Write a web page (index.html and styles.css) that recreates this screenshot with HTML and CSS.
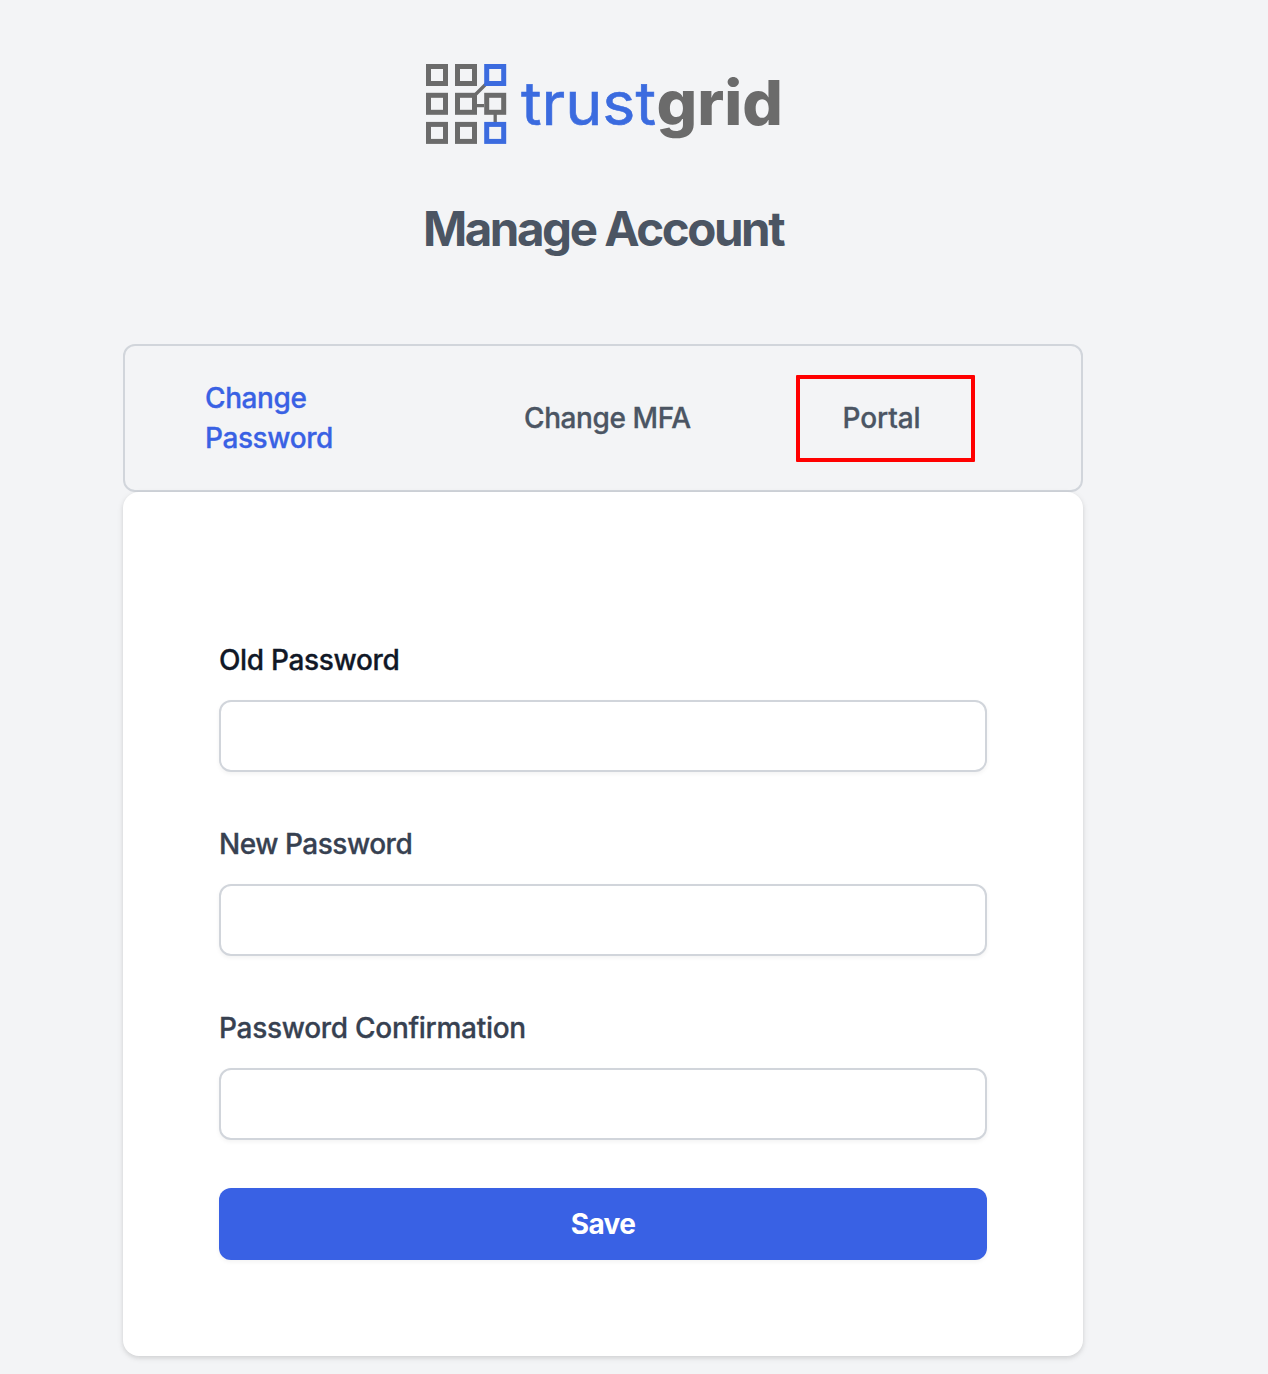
FILE: index.html
```html
<!DOCTYPE html>
<html lang="en">
<head>
<meta charset="utf-8">
<title>Manage Account</title>
<link rel="stylesheet" href="styles.css">
</head>
<body>
<main class="page">
  <header class="header">
    <svg class="logo" viewBox="0 0 358 88" role="img" aria-label="trustgrid">
      <g class="link"><path d="M49 33 62 20M51 41.7H60M71.2 50V60"/></g>
      <g class="node">
        <rect x="4.5" y="2.5" width="17" height="17"/>
        <rect x="33.5" y="2.5" width="17" height="17"/>
        <rect x="4.5" y="31.3" width="17" height="17"/>
        <rect x="33.5" y="31.3" width="17" height="17"/>
        <rect x="62.7" y="31.3" width="17" height="17"/>
        <rect x="4.5" y="60.4" width="17" height="17"/>
        <rect x="33.5" y="60.4" width="17" height="17"/>
        <g class="node-blue">
          <rect x="62.7" y="2.5" width="17" height="17"/>
          <rect x="62.7" y="60.4" width="17" height="17"/>
        </g>
      </g>
      <text class="word word-trust" x="97" y="60.6" textLength="135" lengthAdjust="spacingAndGlyphs">trust</text>
      <text class="word word-grid" x="232.5" y="60.6" textLength="126.5" lengthAdjust="spacingAndGlyphs">grid</text>
    </svg>
    <h1 class="title">Manage Account</h1>
  </header>
  <nav class="tabs">
    <a class="tab tab-active">Change Password</a>
    <a class="tab tab-mfa">Change MFA</a>
    <a class="tab tab-portal">Portal</a>
  </nav>
  <form class="card">
    <label class="field field-first"><span class="label">Old Password</span><input class="input" type="password"></label>
    <label class="field"><span class="label label-new">New Password</span><input class="input" type="password"></label>
    <label class="field"><span class="label label-confirm">Password Confirmation</span><input class="input" type="password"></label>
    <button class="save" type="button">Save</button>
  </form>
</main>
</body>
</html>
```
FILE: styles.css
```css
* { box-sizing: border-box; }
body {
  margin: 0;
  min-height: 1374px;
  background: #f3f4f6;
  font-family: Inter, "Liberation Sans", sans-serif;
  font-size: 28px;
  font-weight: 500;
  line-height: 40px;
  color: #4b5563;
}
.page { width: 960px; margin-left: 123px; padding-top: 64px; }
.header { height: 280px; display: flex; flex-direction: column; align-items: center; }
.logo { display: block; width: 358px; height: 88px; overflow: visible; }
.node rect { fill: none; stroke: #6b6b6b; stroke-width: 5; }
.node .node-blue rect { stroke: #3b6bdf; }
.link path { fill: none; stroke: #6b6b6b; stroke-width: 3.3; }
.word { font-family: Inter, sans-serif; font-size: 60px; }
.word-trust { fill: #3b6bdf; stroke: #3b6bdf; stroke-width: .6; font-weight: 400; }
.word-grid { fill: #6b6b6b; font-size: 61.5px; font-weight: 800; }
.title {
  margin: 47px 0 0;
  font-size: 47.5px;
  line-height: 60px;
  font-weight: 700;
  letter-spacing: -2.45px;
  white-space: nowrap;
}
.tabs {
  display: flex;
  align-items: center;
  height: 148px;
  padding-left: 80px;
  border: 2px solid #d1d5db;
  border-radius: 12px;
}
.tab { letter-spacing: -.4px; -webkit-text-stroke: .3px currentColor; }
.tab-active { width: 186px; color: #3961e4; }
.tab-mfa { margin-left: 133px; width: 272px; }
.tab-portal {
  width: 179px;
  height: 87px;
  padding: 19px 0 0 42.5px;
  border: 4px solid #f00;
  border-radius: 1px;
  letter-spacing: -.1px;
}
.card {
  height: 864px;
  padding: 148px 96px 96px;
  background: #fff;
  border-radius: 16px;
  box-shadow: 0 2px 6px rgba(0,0,0,.1), 0 2px 4px rgba(0,0,0,.06);
}
.field { display: block; margin-bottom: 52px; color: #374151; }
.field-first { color: #111827; }
.label { display: block; letter-spacing: -.34px; -webkit-text-stroke: .3px currentColor; }
.label-new { letter-spacing: -.48px; }
.label-confirm { letter-spacing: -.29px; }
.input {
  display: block;
  width: 100%;
  height: 72px;
  margin-top: 20px;
  border: 2px solid #d1d5db;
  border-radius: 12px;
  background: #fff;
  box-shadow: 0 2px 4px rgba(0,0,0,.05);
}
.save {
  display: block;
  width: 100%;
  height: 72px;
  margin-top: -4px;
  border: 0;
  border-radius: 12px;
  background: #3961e4;
  color: #fff;
  font: 700 28px/40px Inter, sans-serif;
  letter-spacing: -.6px;
  box-shadow: 0 2px 4px rgba(0,0,0,.05);
}
```
